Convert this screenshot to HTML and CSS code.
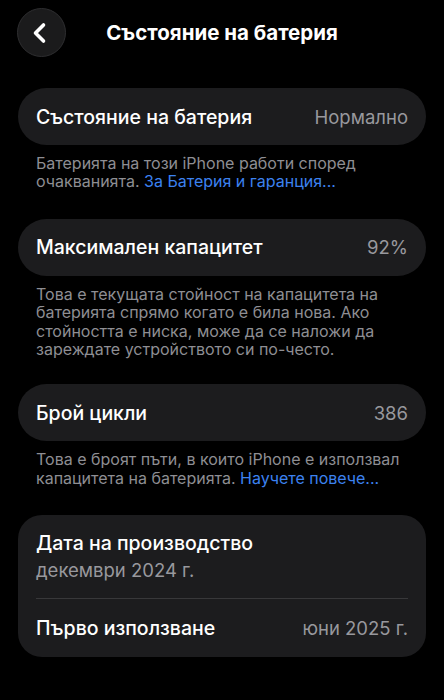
FILE: index.html
```html
<!DOCTYPE html>
<html lang="bg">
<head>
<meta charset="utf-8">
<link rel="stylesheet" href="styles.css">
</head>
<body>
<div class="screen">
  <header class="nav">
    <div class="back">
      <svg width="20" height="22" viewBox="0 0 20 22"><path d="M13.5 3 L5.5 11 L13.5 19" fill="none" stroke="#fff" stroke-width="3.6" stroke-linecap="round" stroke-linejoin="round"/></svg>
    </div>
    <h1 class="title">Състояние на батерия</h1>
  </header>

  <section class="group">
    <div class="card">
      <div class="row"><span class="label">Състояние на батерия</span><span class="value">Нормално</span></div>
    </div>
    <p class="note">Батерията на този iPhone работи според очакванията. <span class="link">За Батерия и гаранция...</span></p>
  </section>

  <section class="group second">
    <div class="card">
      <div class="row"><span class="label">Максимален капацитет</span><span class="value">92%</span></div>
    </div>
    <p class="note">Това е текущата стойност на капацитета на батерията спрямо когато е била нова. Ако стойността е ниска, може да се наложи да зареждате устройството си по-често.</p>
  </section>

  <section class="group">
    <div class="card">
      <div class="row"><span class="label">Брой цикли</span><span class="value">386</span></div>
    </div>
    <p class="note">Това е броят пъти, в които iPhone е използвал капацитета на батерията. <span class="link">Научете повече...</span></p>
  </section>

  <section class="group last">
    <div class="card list">
      <div class="stack">
        <span class="label">Дата на производство</span>
        <span class="sub">декември 2024 г.</span>
      </div>
      <div class="sep"></div>
      <div class="row small"><span class="label">Първо използване</span><span class="value">юни 2025 г.</span></div>
    </div>
  </section>
</div>
</body>
</html>
```
FILE: styles.css
```css
html, body {
  margin: 0;
  padding: 0;
  background: #000;
}
body {
  font-family: Inter, "Noto Sans", "Liberation Sans", sans-serif;
  color: #fff;
  -webkit-font-smoothing: antialiased;
}
.screen {
  width: 444px;
  height: 700px;
  overflow: hidden;
}
.nav {
  position: relative;
  height: 49px;
  padding-top: 8px;
  display: flex;
  align-items: center;
  justify-content: center;
}
.back {
  position: absolute;
  left: 17px;
  top: 8px;
  width: 47px;
  height: 47px;
  border-radius: 50%;
  background: #1b1b1c;
  border: 1px solid #2e2e30;
  display: flex;
  align-items: center;
  justify-content: center;
}
.back svg { margin-left: -3px; }
.title {
  margin: 0;
  font-size: 20.5px;
  font-weight: 700;
  letter-spacing: 0;
}
.group {
  margin: 31px 18px 0;
}
.group + .group { margin-top: 26px; }
.group.second { margin-top: 28px; }
.group.last { margin-top: 28px; }
.card {
  background: #1c1c1e;
  border-radius: 29px;
}
.row {
  height: 57px;
  display: flex;
  align-items: center;
  justify-content: space-between;
  padding: 0 18px;
}
.label {
  font-size: 19.5px;
  font-weight: 500;
  color: #fff;
}
.value {
  font-size: 18.5px;
  color: #98989d;
}
.note {
  margin: 9px 18px 0;
  font-size: 16px;
  line-height: 18.4px;
  color: #8e8e93;
}
.link {
  display: inline-block;
  color: #3c82f0;
}
.list {
  border-radius: 24px;
  padding-top: 16px;
}
.stack {
  display: flex;
  flex-direction: column;
  padding: 0 18px;
  gap: 3px;
}
.stack .label { line-height: 24px; }
.sub {
  font-size: 18.5px;
  line-height: 24px;
  color: #98989d;
}
.sep {
  height: 1px;
  background: #38383a;
  margin: 16px 18px 0;
}
.row.small { height: 58px; }
```
